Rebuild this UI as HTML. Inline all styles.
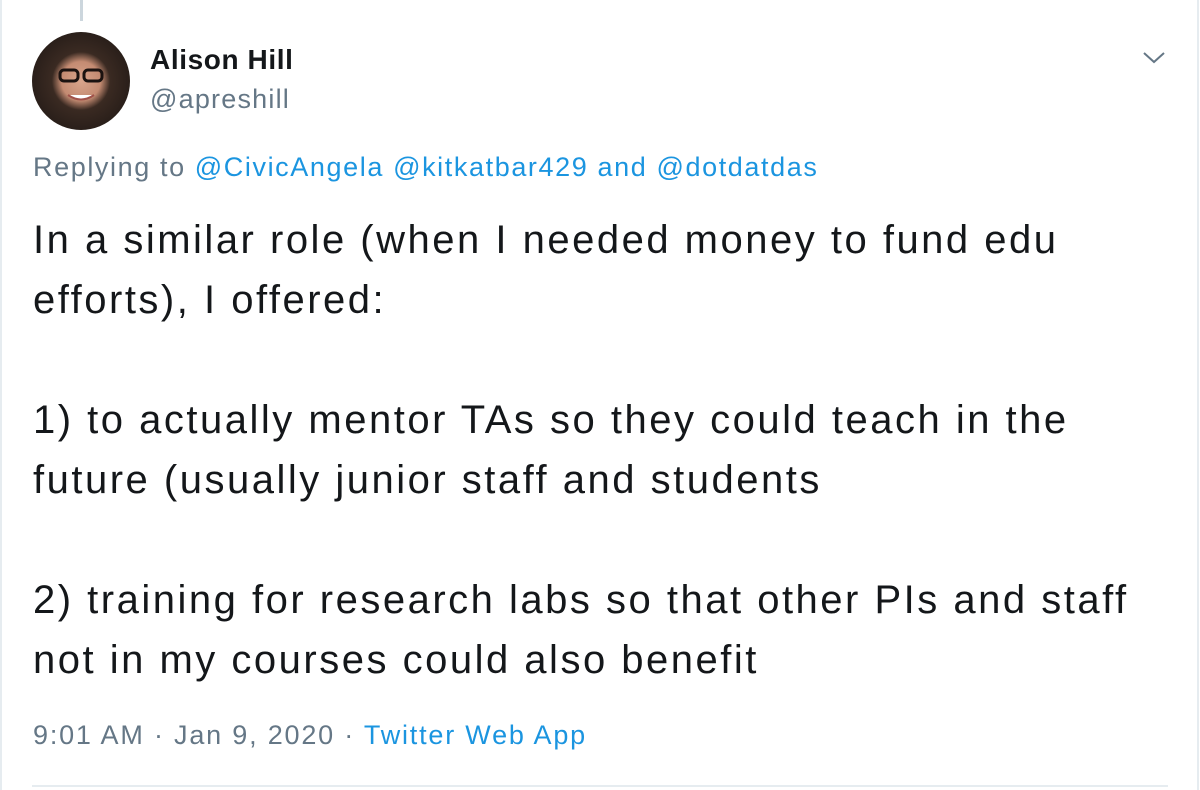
<!DOCTYPE html>
<html><head><meta charset="utf-8"><style>
body{margin:0;width:1200px;height:790px;background:#fff;font-family:"Liberation Sans",Arial,sans-serif;position:relative;overflow:hidden}
.lb{position:absolute;left:0;top:0;width:2px;height:790px;background:#e6ecf0}
.rb{position:absolute;left:1197px;top:0;width:2px;height:790px;background:#e6ecf0}
.thread{position:absolute;left:80px;top:0;width:3px;height:21px;background:#ccd6dd}
.av{position:absolute;left:32px;top:32px;width:98px;height:98px;border-radius:50%;background:radial-gradient(circle at 50% 50%,#d9a58c 0,#c48b72 28%,#3a2a22 42%,#2a1f1a 70%,#6b6f60 100%);overflow:hidden}
.t{position:absolute;white-space:nowrap}
.name{left:150px;top:44px;font-size:28px;font-weight:bold;color:#14171a;letter-spacing:0.6px}
.handle{left:150px;top:84px;font-size:27px;color:#657786;letter-spacing:1.2px}
.rep{left:33px;top:152px;font-size:27px;color:#657786;letter-spacing:1.6px}
.b{color:#1b95e0}
.body{left:33px;top:210px;font-size:40px;line-height:60px;color:#14171a;letter-spacing:2.5px}
.ts{left:33px;top:720px;font-size:27px;color:#657786;letter-spacing:1.8px}
.line{position:absolute;left:32px;top:785px;width:1136px;height:2px;background:#e6ecf0}
</style></head><body>
<div class="lb"></div><div class="rb"></div><div class="thread"></div>
<div class="av"><svg width="98" height="98"><rect x="28" y="38" width="18" height="11" rx="4" fill="none" stroke="#1b1210" stroke-width="3"/><rect x="52" y="38" width="18" height="11" rx="4" fill="none" stroke="#1b1210" stroke-width="3"/><path d="M36 63 Q49 72 62 63" fill="#fff" stroke="#a0524a" stroke-width="2"/></svg></div>
<div class="t name">Alison Hill</div>
<div class="t handle">@apreshill</div>
<svg style="position:absolute;left:1142px;top:50px" width="24" height="16"><path d="M2 3 L12 12 L22 3" fill="none" stroke="#657786" stroke-width="2"/></svg>
<div class="t rep">Replying to <span class="b">@CivicAngela</span> <span class="b">@kitkatbar429</span> <span class="b">and</span> <span class="b">@dotdatdas</span></div>
<div class="t body">In a similar role (when I needed money to fund edu<br>efforts), I offered:<br><br>1) to actually mentor TAs so they could teach in the<br>future (usually junior staff and students<br><br>2) training for research labs so that other PIs and staff<br>not in my courses could also benefit</div>
<div class="t ts">9:01 AM · Jan 9, 2020 · <span class="b">Twitter Web App</span></div>
<div class="line"></div>
</body></html>
